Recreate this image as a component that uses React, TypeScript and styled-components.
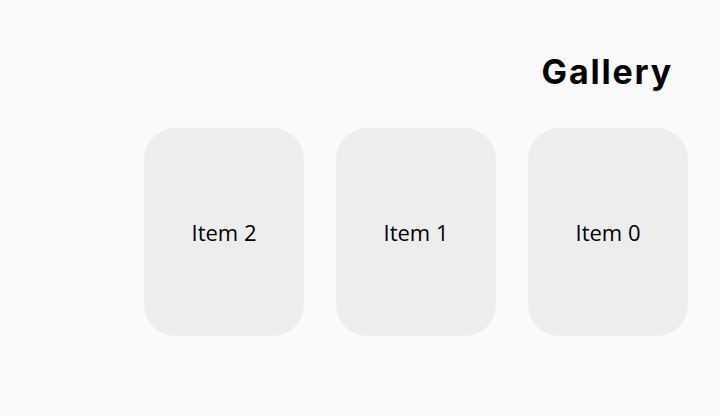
import React from 'react';
import styled, { createGlobalStyle } from 'styled-components';

const GlobalStyle = createGlobalStyle`
    html, body {
        margin: 0;
        padding: 0;
        background: #fafafa;
        font-family: 'Open Sans', 'Liberation Sans', sans-serif;
        color: #000;
    }
`;

const Page = styled.div`
    width: 720px;
    height: 416px;
    box-sizing: border-box;
    padding: 48px 32px 0;
    display: flex;
    flex-direction: column;
    align-items: flex-end;
`;

const Title = styled.h1`
    margin: 0 15px 0 0;
    font-size: 34px;
    line-height: 48px;
    font-weight: 700;
    font-family: Inter, 'Open Sans', sans-serif;
    letter-spacing: 1.8px;
`;

const Row = styled.div`
    margin-top: 32px;
    display: flex;
    flex-direction: row-reverse;
    gap: 32px;
`;

const Card = styled.div`
    width: 160px;
    height: 208px;
    border-radius: 32px;
    background: #ededed;
    display: flex;
    align-items: center;
    justify-content: center;
    font-size: 22px;
`;

const items = [0, 1, 2];

export default function App() {
    return (
        <>
            <GlobalStyle />
            <Page>
                <Title>Gallery</Title>
                <Row>
                    {items.map((i) => (
                        <Card key={i}>Item {i}</Card>
                    ))}
                </Row>
            </Page>
        </>
    );
}
